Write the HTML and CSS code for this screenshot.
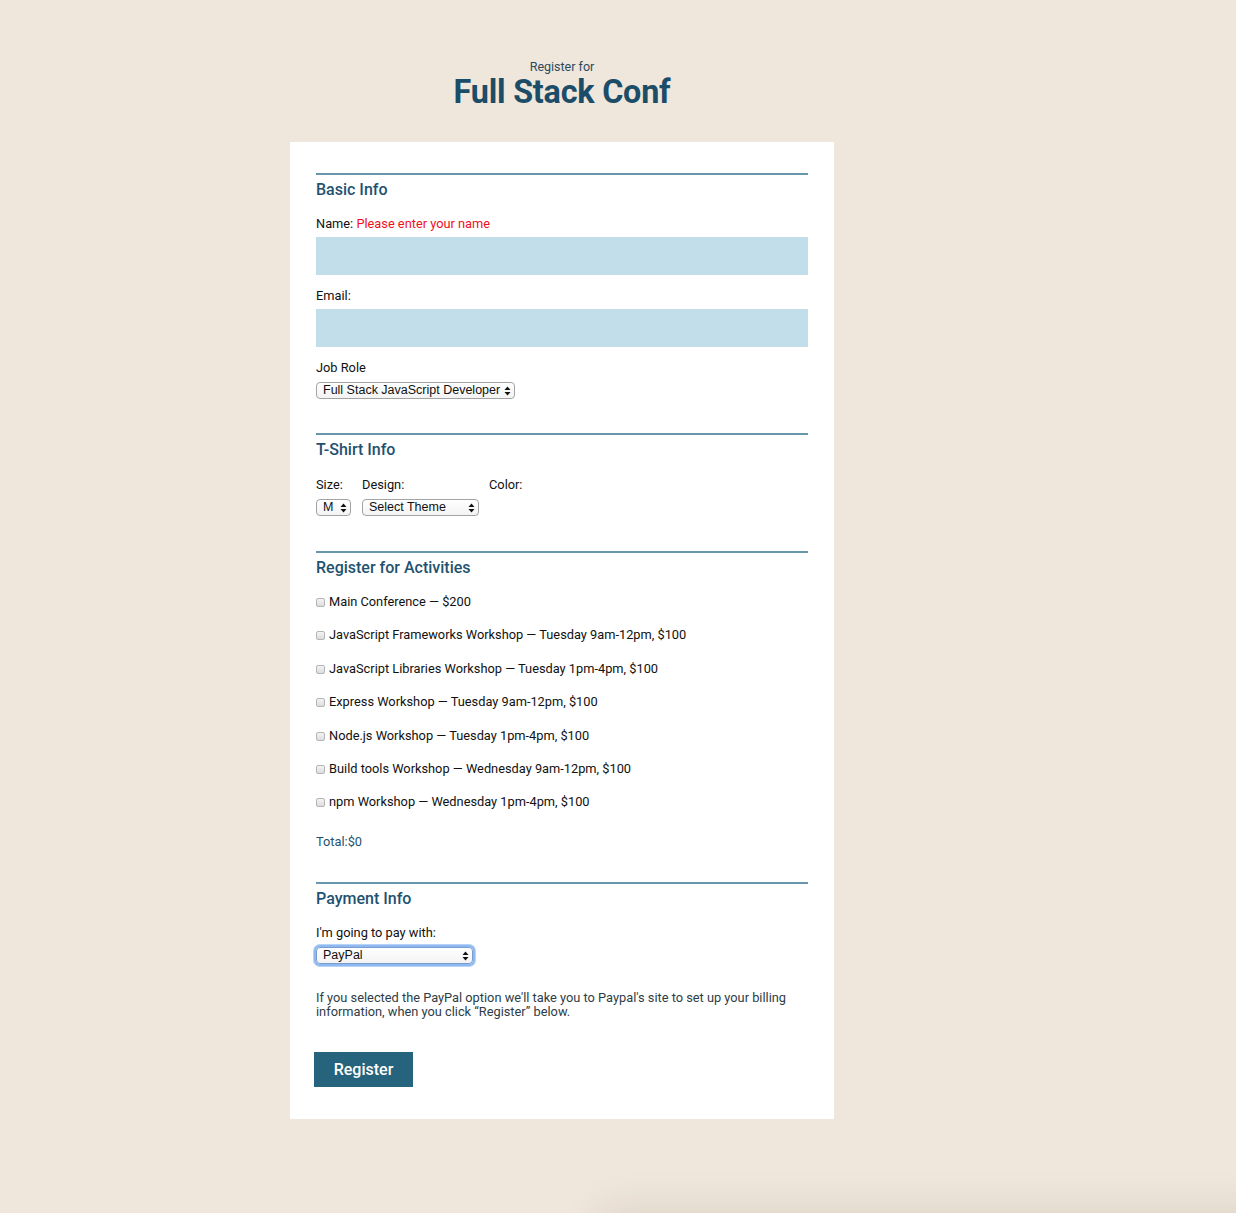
FILE: index.html
```html
<!DOCTYPE html>
<html lang="en">
<head>
<meta charset="utf-8">
<title>Full Stack Conf</title>
<link rel="stylesheet" href="styles.css">
</head>
<body>
<div class="page">
<header class="header">
  <span class="subtitle">Register for</span>
  <h1 class="title">Full Stack Conf</h1>
</header>
<main class="card">
  <form class="form">
    <section class="section section-basic">
      <h2 class="heading">Basic Info</h2>
      <label class="label">Name: <span class="error">Please enter your name</span></label>
      <input class="text-input" type="text">
      <label class="label">Email:</label>
      <input class="text-input" type="email">
      <label class="label">Job Role</label>
      <span class="select-wrap w-job"><select class="select"><option>Full Stack JavaScript Developer</option></select><svg class="arrows" width="7" height="10" viewBox="0 0 7 10"><path d="M3.5 0.5L6.5 4H0.5Z M3.5 9.5L6.5 6H0.5Z" fill="#111"/></svg></span>
    </section>
    <section class="section section-shirt">
      <h2 class="heading">T-Shirt Info</h2>
      <div class="shirt-row">
        <div class="shirt-col">
          <label class="label">Size:</label>
          <span class="select-wrap w-size"><select class="select"><option>M</option></select><svg class="arrows" width="7" height="10" viewBox="0 0 7 10"><path d="M3.5 0.5L6.5 4H0.5Z M3.5 9.5L6.5 6H0.5Z" fill="#111"/></svg></span>
        </div>
        <div class="shirt-col">
          <label class="label">Design:</label>
          <span class="select-wrap w-design"><select class="select"><option>Select Theme</option></select><svg class="arrows" width="7" height="10" viewBox="0 0 7 10"><path d="M3.5 0.5L6.5 4H0.5Z M3.5 9.5L6.5 6H0.5Z" fill="#111"/></svg></span>
        </div>
        <div class="shirt-col">
          <label class="label">Color:</label>
        </div>
      </div>
    </section>
    <section class="section section-activities">
      <h2 class="heading">Register for Activities</h2>
      <ul class="activities">
        <li class="activity"><input class="check" type="checkbox"><span>Main Conference — $200</span></li>
        <li class="activity"><input class="check" type="checkbox"><span>JavaScript Frameworks Workshop — Tuesday 9am-12pm, $100</span></li>
        <li class="activity"><input class="check" type="checkbox"><span>JavaScript Libraries Workshop — Tuesday 1pm-4pm, $100</span></li>
        <li class="activity"><input class="check" type="checkbox"><span>Express Workshop — Tuesday 9am-12pm, $100</span></li>
        <li class="activity"><input class="check" type="checkbox"><span>Node.js Workshop — Tuesday 1pm-4pm, $100</span></li>
        <li class="activity"><input class="check" type="checkbox"><span>Build tools Workshop — Wednesday 9am-12pm, $100</span></li>
        <li class="activity"><input class="check" type="checkbox"><span>npm Workshop — Wednesday 1pm-4pm, $100</span></li>
      </ul>
      <p class="total">Total:$0</p>
    </section>
    <section class="section section-payment">
      <h2 class="heading">Payment Info</h2>
      <label class="label">I'm going to pay with:</label>
      <span class="select-wrap w-pay focus"><select class="select"><option>PayPal</option></select><svg class="arrows" width="7" height="10" viewBox="0 0 7 10"><path d="M3.5 0.5L6.5 4H0.5Z M3.5 9.5L6.5 6H0.5Z" fill="#111"/></svg></span>
      <p class="note">If you selected the PayPal option we'll take you to Paypal's site to set up your billing information, when you click “Register” below.</p>
    </section>
    <button class="register" type="button">Register</button>
  </form>
</main>
</div>
<div class="window-shadow"></div>
</body>
</html>
```
FILE: styles.css
```css
* { box-sizing: border-box; }
html, body { margin: 0; padding: 0; }
body {
  background: #efe6dc;
  font-family: Roboto, "Noto Sans", Arial, sans-serif;
  color: #111;
  min-height: 1213px;
  overflow: hidden;
}
.page {
  width: 1124px;
}
.header {
  display: flex;
  flex-direction: column;
  align-items: center;
  padding-top: 59px;
}
.subtitle {
  font-size: 12.5px;
  line-height: 16px;
  color: #2b4a5c;
}
.title {
  margin: -1px 0 0;
  font-size: 32.3px;
  line-height: 36px;
  font-weight: 700;
  color: #1c4d68;
  letter-spacing: -0.2px;
}
.card {
  width: 544px;
  margin: 32px auto 0;
  background: #fff;
  padding: 31px 26px 32px;
}
.form { display: flex; flex-direction: column; }
.section {
  border-top: 2px solid #6897ad;
  display: flex;
  flex-direction: column;
  align-items: flex-start;
}
.heading {
  margin: 5px 0 0;
  font-size: 16px;
  line-height: 20px;
  font-weight: 500;
  color: #1f5270;
}
.label {
  font-size: 12.8px;
  line-height: 16px;
  color: #111;
}
.heading + .label { margin-top: 16px; }
.error { color: #f0101e; }
.text-input {
  display: block;
  width: 100%;
  height: 38px;
  margin: 5px 0 13px;
  border: 0;
  background: #c2deea;
  outline: none;
}
.select-wrap {
  position: relative;
  display: inline-block;
  margin-top: 6px;
}
.select {
  -webkit-appearance: none;
  appearance: none;
  display: block;
  width: 100%;
  height: 17px;
  padding: 0 0 0 6px;
  margin: 0;
  border: 1px solid #a3a3a3;
  border-radius: 4px;
  background: linear-gradient(#ffffff, #f3f3f3);
  font-family: "Liberation Sans", Arial, sans-serif;
  font-size: 12.5px;
  line-height: 15px;
  color: #111;
  outline: none;
}
.arrows {
  position: absolute;
  right: 4px;
  top: 3.5px;
  pointer-events: none;
}
.w-job { width: 199px; }
.w-size { width: 35px; }
.w-design { width: 117px; }
.w-pay { width: 157px; }
.focus .select {
  box-shadow: 0 0 0 2px #8db8f0, 0 0 0 3px #b7d3f7;
  border-color: #7a9ccf;
}
.section-basic { padding-bottom: 34px; }
.section-shirt { padding-bottom: 35px; }
.shirt-row {
  display: flex;
  margin-top: 17px;
}
.shirt-col {
  display: flex;
  flex-direction: column;
  align-items: flex-start;
}
.shirt-col:nth-child(1) { margin-right: 11px; }
.shirt-col:nth-child(2) { margin-right: 10px; }
.shirt-row .label { margin-top: 0; }
.activities {
  list-style: none;
  margin: 16px 0 0;
  padding: 0;
  display: flex;
  flex-direction: column;
  gap: 17.4px;
}
.activity {
  display: flex;
  align-items: center;
  font-size: 12.8px;
  line-height: 16px;
  color: #111;
}
.check {
  -webkit-appearance: none;
  appearance: none;
  width: 9px;
  height: 9px;
  margin: 1px 4px 0 0;
  border: 1px solid #b5b5b5;
  border-radius: 2px;
  background: linear-gradient(#f4f4f4, #dcdcdc);
}
.total {
  margin: 24px 0 32px;
  font-size: 12.8px;
  line-height: 16px;
  color: #1f5270;
}
.section-payment .heading + .label { margin-top: 16px; }
.note {
  margin: 27px 0 0;
  font-size: 12.8px;
  line-height: 14px;
  color: #2e3d47;
  max-width: 490px;
}
.register {
  align-self: flex-start;
  margin: 33px 0 0 -2px;
  width: 99px;
  height: 35px;
  border: 0;
  background: #26637d;
  color: #fff;
  font-family: Roboto, Arial, sans-serif;
  font-size: 16px;
  font-weight: 500;
  padding: 0;
}
.window-shadow {
  position: fixed;
  left: 600px;
  right: -40px;
  top: 1213px;
  height: 60px;
  box-shadow: 0 -4px 40px rgba(80, 60, 30, 0.10);
}
```
